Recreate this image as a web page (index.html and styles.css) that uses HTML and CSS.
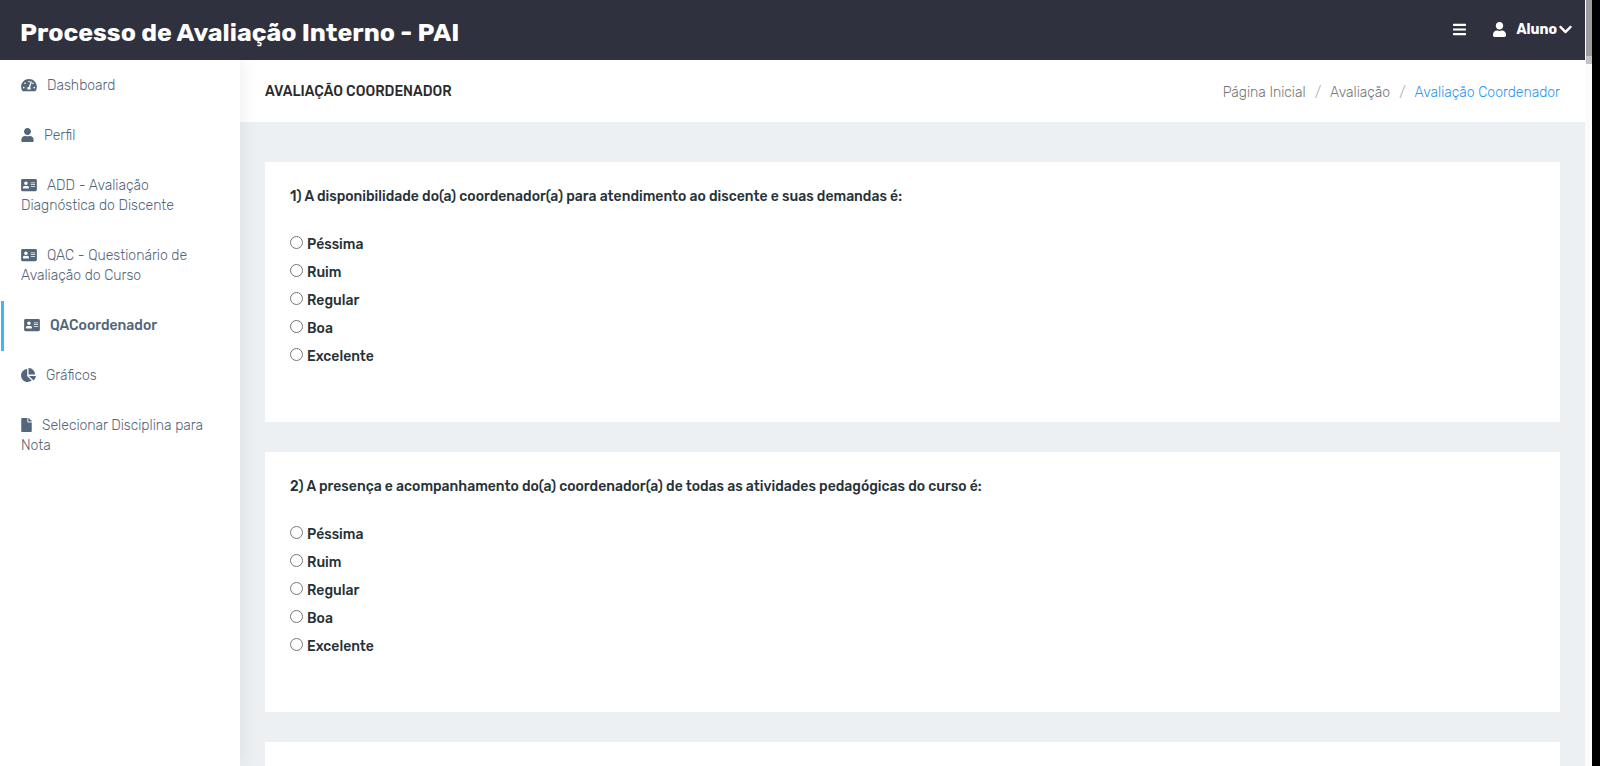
FILE: index.html
```
<!DOCTYPE html>
<html lang="pt-BR">
<head>
<meta charset="utf-8">
<meta name="viewport" content="width=device-width, initial-scale=1">
<title>Processo de Avaliação Interno - PAI</title>
<link rel="stylesheet" href="styles.css">
</head>
<body>
<svg class="sprite" aria-hidden="true">
<symbol id="bars" viewBox="0 0 448 512"><path d="M16 132h416c8.8 0 16-7.2 16-16V76c0-8.8-7.2-16-16-16H16C7.2 60 0 67.200 0 76v40c0 8.800 7.200 16 16 16zm0 160h416c8.800 0 16-7.200 16-16v-40c0-8.800-7.200-16-16-16H16c-8.800 0-16 7.200-16 16v40c0 8.800 7.200 16 16 16zm0 160h416c8.800 0 16-7.200 16-16v-40c0-8.800-7.200-16-16-16H16c-8.800 0-16 7.200-16 16v40c0 8.800 7.200 16 16 16z"/></symbol>
<symbol id="user" viewBox="0 0 448 512"><path d="M224 256c70.7 0 128-57.3 128-128S294.7 0 224 0 96 57.3 96 128s57.3 128 128 128zm89.6 32h-16.700c-22.200 10.200-46.900 16-72.900 16s-50.600-5.800-72.900-16h-16.700C60.200 288 0 348.200 0 422.400V464c0 26.500 21.500 48 48 48h352c26.500 0 48-21.500 48-48v-41.600c0-74.200-60.200-134.400-134.400-134.400z"/></symbol>
<symbol id="chevron" viewBox="0 0 448 512"><path d="M207.029 381.476L12.686 187.132c-9.373-9.373-9.373-24.569 0-33.941l22.667-22.667c9.357-9.357 24.522-9.375 33.901-.04L224 284.505l154.745-154.021c9.379-9.335 24.544-9.317 33.901.04l22.667 22.667c9.373 9.373 9.373 24.569 0 33.941L240.971 381.476c-9.373 9.372-24.569 9.372-33.942 0z"/></symbol>
<symbol id="card" viewBox="0 0 576 512"><path d="M528 32H48C21.500 32 0 53.500 0 80v352c0 26.500 21.500 48 48 48h480c26.500 0 48-21.500 48-48V80c0-26.500-21.500-48-48-48zm-352 96c35.300 0 64 28.700 64 64s-28.700 64-64 64-64-28.700-64-64 28.700-64 64-64zm112 236.800c0 10.600-10 19.200-22.400 19.200H86.400C74 384 64 375.400 64 364.800v-19.200c0-31.800 30.100-57.600 67.200-57.600h5c12.300 5.100 25.700 8 39.800 8s27.600-2.900 39.800-8h5c37.100 0 67.200 25.800 67.200 57.600v19.200zM512 312c0 4.400-3.600 8-8 8H360c-4.400 0-8-3.600-8-8v-16c0-4.400 3.600-8 8-8h144c4.400 0 8 3.600 8 8v16zm0-64c0 4.400-3.600 8-8 8H360c-4.400 0-8-3.600-8-8v-16c0-4.400 3.600-8 8-8h144c4.400 0 8 3.600 8 8v16zm0-64c0 4.400-3.600 8-8 8H360c-4.400 0-8-3.600-8-8v-16c0-4.400 3.600-8 8-8h144c4.400 0 8 3.600 8 8v16z"/></symbol>
<symbol id="file" viewBox="0 0 384 512"><path d="M224 136V0H24C10.700 0 0 10.700 0 24v464c0 13.300 10.700 24 24 24h336c13.300 0 24-10.700 24-24V160H248c-13.200 0-24-10.800-24-24zm160-14.100v6.100H256V0h6.100c6.400 0 12.500 2.500 17 7l97.900 98c4.500 4.500 7 10.600 7 16.900z"/></symbol>
<symbol id="pie" viewBox="0 0 544 512"><path d="M527.790 288H290.500l158.030 158.030c6.040 6.040 15.980 6.530 22.190.680 38.700-36.460 65.320-85.610 73.130-140.860 1.340-9.460-6.510-17.850-16.060-17.850zm-15.830-64.800C503.720 103.740 408.260 8.280 288.800.040 279.680-.590 272 7.100 272 16.240V240h223.770c9.140 0 16.820-7.680 16.190-16.800zM224 288V50.710c0-9.550-8.390-17.400-17.840-16.060C86.990 51.490-4.100 155.600.140 280.370 4.500 408.510 114.830 513.590 243.030 511.980c50.400-.630 96.970-16.870 135.260-44.030 7.900-5.600 8.420-17.230 1.570-24.080L224 288z"/></symbol>
<symbol id="gauge" viewBox="0 0 576 512"><path d="M288 32C128.940 32 0 160.940 0 320c0 52.800 14.250 102.260 39.060 144.800 5.610 9.620 16.300 15.200 27.440 15.200h443c11.140 0 21.830-5.580 27.440-15.200C561.750 422.260 576 372.800 576 320c0-159.060-128.940-288-288-288zm0 64c14.710 0 26.580 10.130 30.320 23.650-1.110 2.260-2.640 4.230-3.450 6.670l-9.220 27.670c-5.130 3.490-10.970 6.010-17.640 6.010-17.670 0-32-14.330-32-32S270.330 96 288 96zM96 384c-17.670 0-32-14.330-32-32s14.330-32 32-32 32 14.330 32 32-14.330 32-32 32zm48-160c-17.670 0-32-14.330-32-32s14.330-32 32-32 32 14.330 32 32-14.330 32-32 32zm246.770-72.410l-61.330 184C343.130 347.330 352 364.540 352 384c0 11.720-3.380 22.550-8.880 32H232.880c-5.500-9.450-8.880-20.280-8.880-32 0-33.940 26.500-61.430 59.900-63.590l61.340-184.010c4.170-12.560 17.730-19.450 30.360-15.170 12.570 4.190 19.350 17.790 15.170 30.360zm14.660 57.200l15.520-46.550c3.470-1.290 7.130-2.230 11.050-2.230 17.670 0 32 14.330 32 32s-14.330 32-32 32c-11.380-.010-20.890-6.280-26.570-15.220zM480 384c-17.670 0-32-14.330-32-32s14.330-32 32-32 32 14.330 32 32-14.330 32-32 32z"/></symbol>
</svg>
<div class="shell">
  <div class="page">
    <header class="topbar">
      <a class="brand" href="#">Processo de Avaliação Interno - PAI</a>
      <div class="tools">
        <button class="tool" type="button" aria-label="Menu"><svg class="icon narrow"><use href="#bars"/></svg></button>
        <button class="tool account" type="button"><svg class="icon narrow"><use href="#user"/></svg><span>Aluno</span><svg class="icon narrow arrow"><use href="#chevron"/></svg></button>
      </div>
    </header>
    <div class="body">
      <nav class="sidebar">
        <a class="item" href="#"><svg class="icon wide"><use href="#gauge"/></svg>Dashboard</a>
        <a class="item" href="#"><svg class="icon narrow"><use href="#user"/></svg>Perfil</a>
        <a class="item" href="#"><svg class="icon wide"><use href="#card"/></svg>ADD - Avaliação Diagnóstica do Discente</a>
        <a class="item" href="#"><svg class="icon wide"><use href="#card"/></svg>QAC - Questionário de Avaliação do Curso</a>
        <a class="item active" href="#" aria-current="page"><svg class="icon wide"><use href="#card"/></svg>QACoordenador</a>
        <a class="item" href="#"><svg class="icon medium"><use href="#pie"/></svg>Gráficos</a>
        <a class="item" href="#"><svg class="icon slim"><use href="#file"/></svg>Selecionar Disciplina para Nota</a>
      </nav>
      <main class="content">
        <div class="heading">
          <h1 class="title">Avaliação Coordenador</h1>
          <nav class="crumbs" aria-label="Caminho">
            <a class="crumb" href="#">Página Inicial</a><span class="slash">/</span><a class="crumb" href="#">Avaliação</a><span class="slash">/</span><a class="crumb current" href="#">Avaliação Coordenador</a>
          </nav>
        </div>
        <form class="questions">
          <fieldset class="question">
            <legend class="prompt">1) A disponibilidade do(a) coordenador(a) para atendimento ao discente e suas demandas é:</legend>
            <label class="option"><input class="radio" type="radio" name="q1">Péssima</label>
            <label class="option"><input class="radio" type="radio" name="q1">Ruim</label>
            <label class="option"><input class="radio" type="radio" name="q1">Regular</label>
            <label class="option"><input class="radio" type="radio" name="q1">Boa</label>
            <label class="option"><input class="radio" type="radio" name="q1">Excelente</label>
          </fieldset>
          <fieldset class="question">
            <legend class="prompt">2) A presença e acompanhamento do(a) coordenador(a) de todas as atividades pedagógicas do curso é:</legend>
            <label class="option"><input class="radio" type="radio" name="q2">Péssima</label>
            <label class="option"><input class="radio" type="radio" name="q2">Ruim</label>
            <label class="option"><input class="radio" type="radio" name="q2">Regular</label>
            <label class="option"><input class="radio" type="radio" name="q2">Boa</label>
            <label class="option"><input class="radio" type="radio" name="q2">Excelente</label>
          </fieldset>
          <fieldset class="question"></fieldset>
        </form>
      </main>
    </div>
  </div>
  <div class="scroll"><div class="thumb"></div></div>
</div>
</body>
</html>
```
FILE: styles.css
```
* { box-sizing: border-box; }
body {
  margin: 0;
  background: #000;
  color: #263238;
  font: 300 14px/20px Rubik, Roboto, sans-serif;
}
.sprite { display: none; }
a { color: inherit; text-decoration: none; }

.shell {
  display: flex;
  height: 100vh;
  padding-right: 8px;
  overflow: hidden;
}
.page {
  flex: 1;
  min-width: 0;
  display: flex;
  flex-direction: column;
}

.topbar {
  flex: none;
  display: flex;
  justify-content: space-between;
  height: 60px;
  padding: 0 13px 0 20px;
  background: #2f323e;
  color: #fff;
}
.brand {
  padding-top: 4px;
  font-size: 25px;
  font-weight: 700;
  line-height: 58px;
}
.tools {
  display: flex;
  gap: 27px;
  height: 58px;
}
.tool {
  display: flex;
  align-items: center;
  padding: 0;
  border: 0;
  background: none;
  color: inherit;
  font: inherit;
  font-weight: 700;
}
.account .arrow { margin-left: 2px; }
.account span {
  margin-left: 10px;
  padding-top: 2px;
}

.icon {
  height: 14px;
  fill: currentColor;
}
.tool .icon { height: 15px; }
.wide { width: 16px; }
.medium { width: 15px; }
.narrow { width: 13px; }
.slim { width: 11px; }

.body {
  flex: 1;
  min-height: 0;
  display: flex;
}
.sidebar {
  flex: none;
  width: 240px;
  padding-top: 1px;
  background: #fff;
  box-shadow: 1px 0 20px rgba(0, 0, 0, .08);
  clip-path: inset(0 -30px 0 0);
  z-index: 1;
}
.item {
  display: block;
  padding: 15px 30px 15px 21px;
  color: #54667a;
}
.item .icon {
  margin-right: 10px;
  vertical-align: -2px;
}
.active {
  margin-left: 1px;
  padding-left: 20px;
  border-left: 3px solid #41b3f9;
  font-weight: 500;
}

.content {
  flex: 1;
  min-width: 0;
  overflow: hidden;
  background: #ecf0f3;
}
.heading {
  display: flex;
  justify-content: space-between;
  align-items: center;
  height: 62px;
  padding: 2px 25px 0;
  background: #fff;
}
.title {
  margin: 0;
  color: #2b2b2b;
  font-size: 14px;
  font-weight: 500;
  text-transform: uppercase;
}
.crumbs {
  display: flex;
  gap: 9px;
  padding-top: 2px;
  color: #777;
}
.slash { color: #aaa; }
.current { color: #2f96ea; }

.questions {
  display: flex;
  flex-direction: column;
  gap: 30px;
  padding: 40px 25px;
}
.question {
  flex: none;
  min-height: 260px;
  margin: 0;
  padding: 25px 25px 50px;
  border: 0;
  background: #fff;
  font-weight: 500;
}
.prompt {
  float: left;
  width: 100%;
  margin-bottom: 24px;
  padding: 0;
}
.option {
  display: flex;
  align-items: center;
  clear: both;
  height: 28px;
}
.radio {
  width: 13px;
  height: 13px;
  margin: 0 4px 5px 0;
}

.scroll {
  flex: none;
  width: 7px;
  padding-left: 1px;
  background: #fbfbfb;
}
.thumb {
  height: 64px;
  background: #9c9c9e;
  border-bottom: 8px solid #c4c4c4;
}
```
